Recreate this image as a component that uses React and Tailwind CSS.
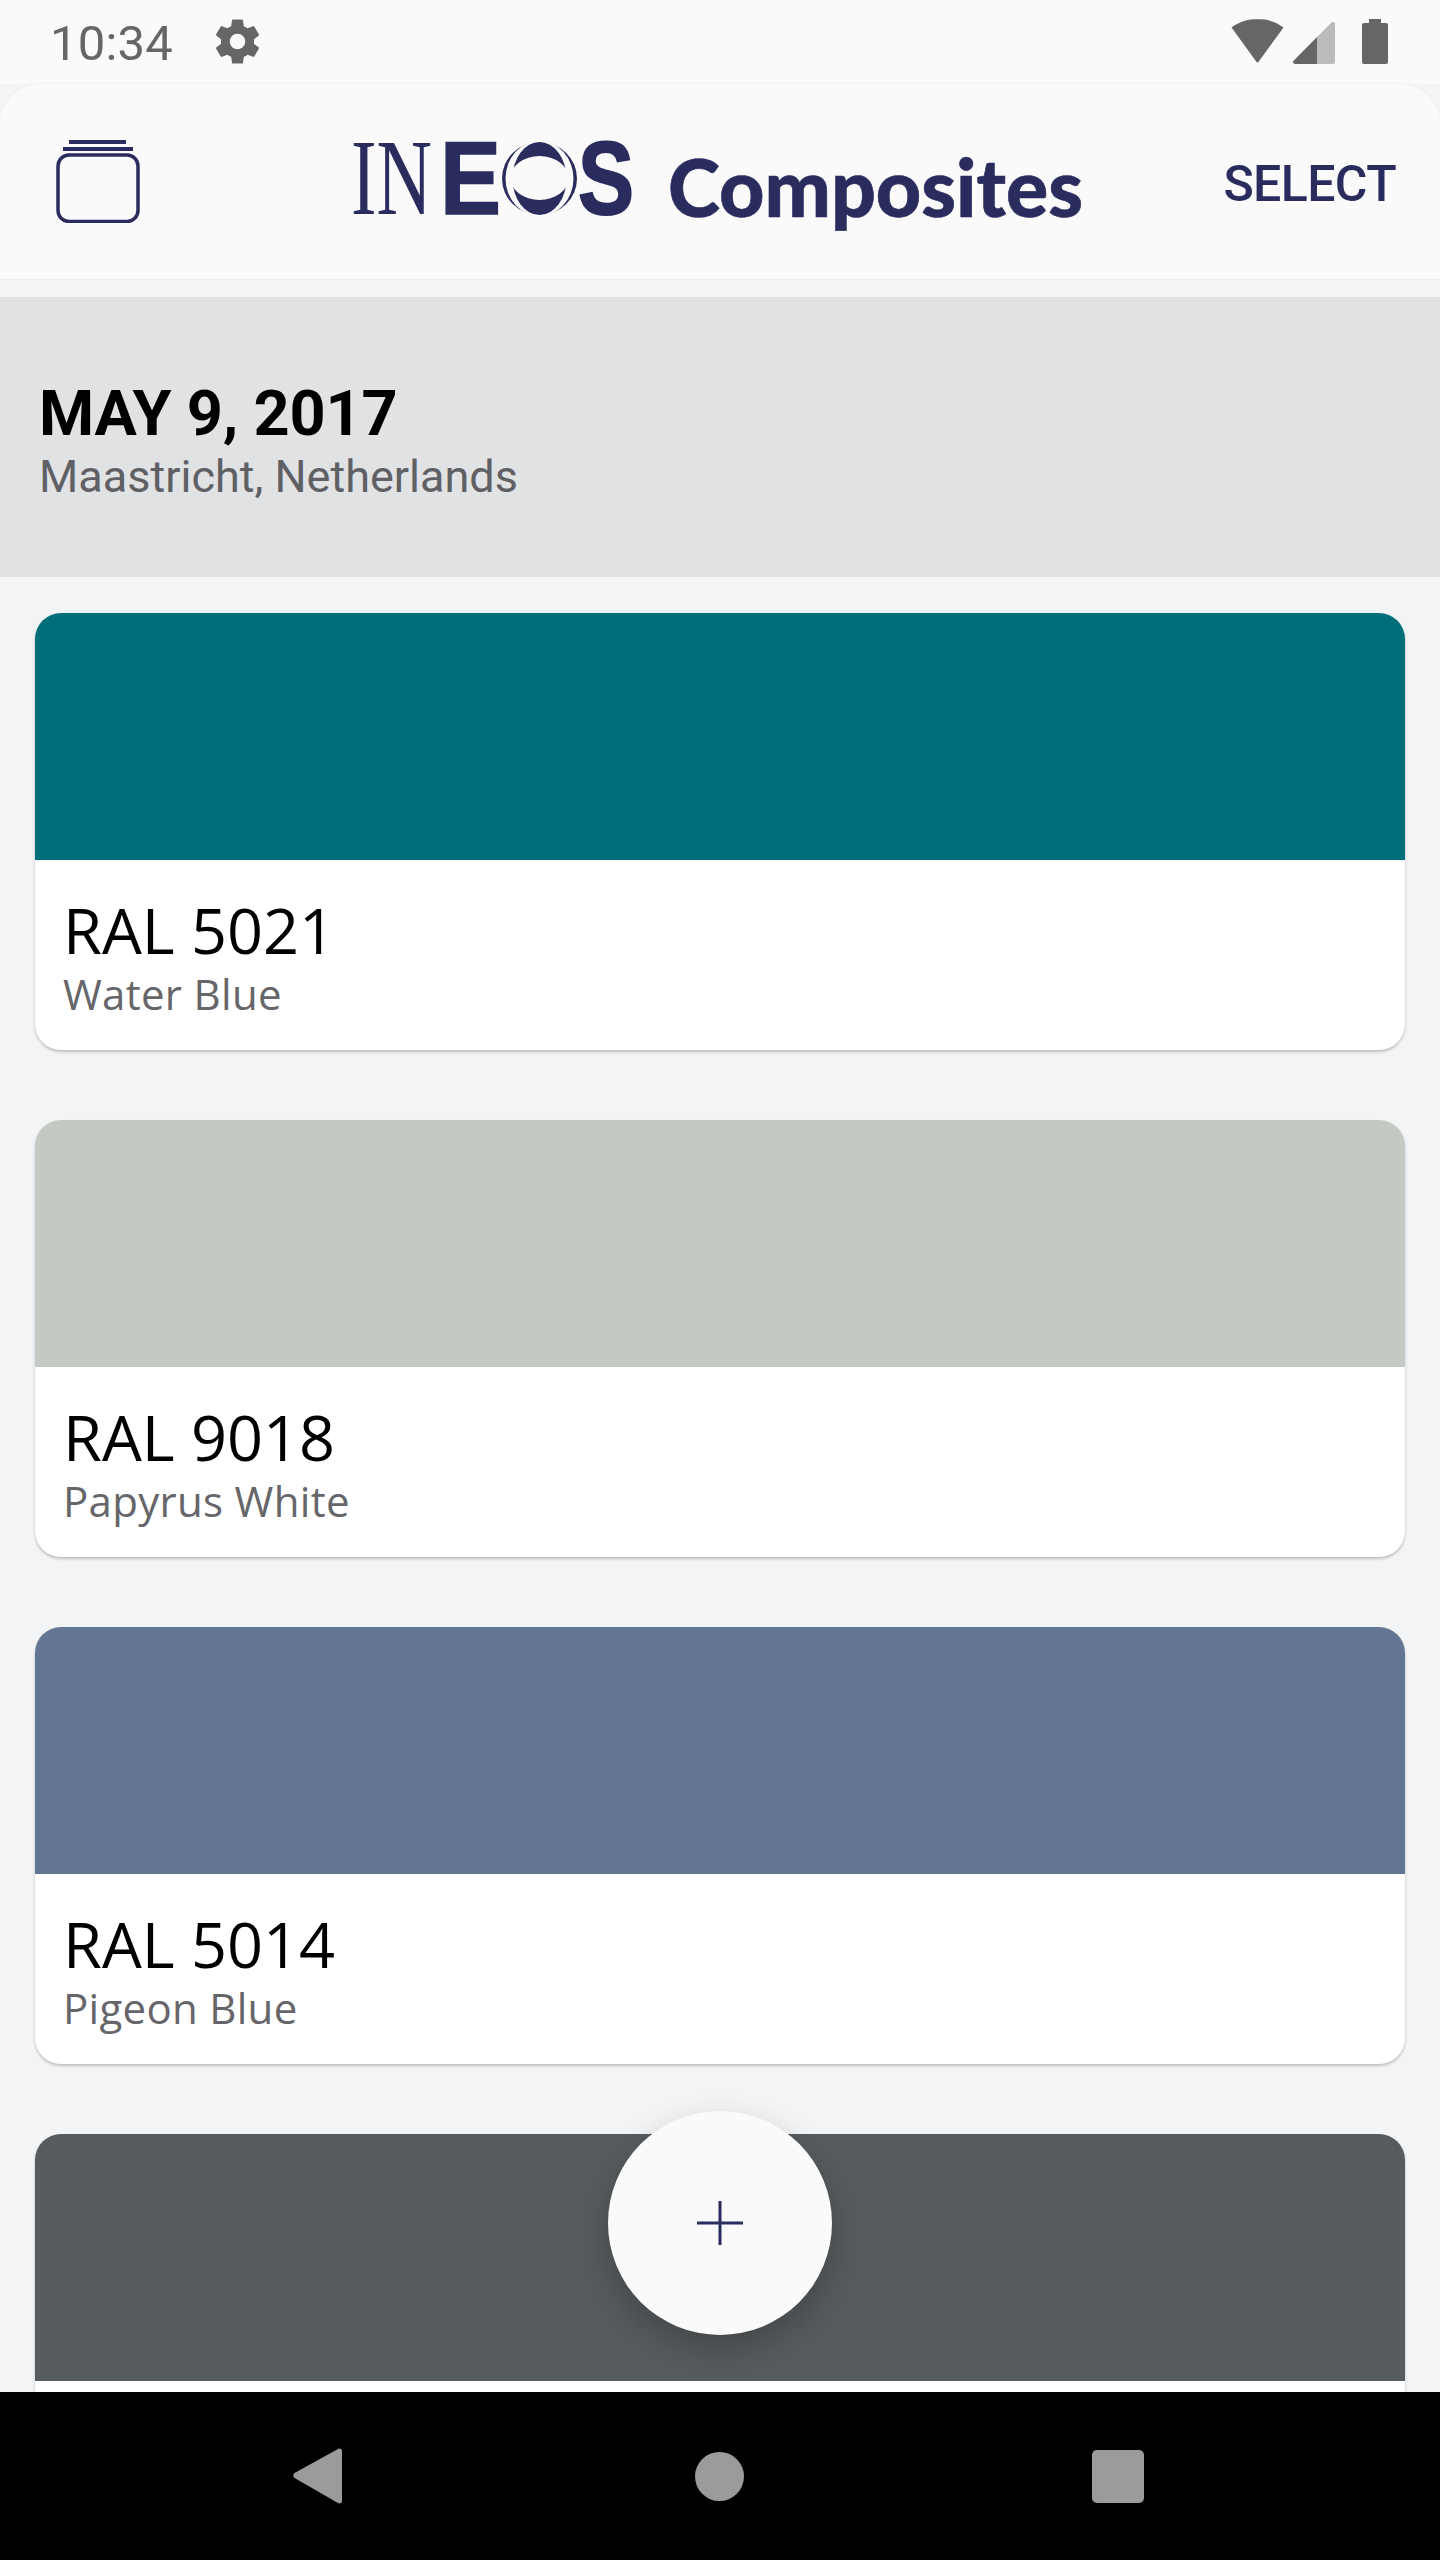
const navy = "#2a2c5e";

const colours = [
  { code: "RAL 5021", name: "Water Blue", swatch: "bg-[#006f7a]" },
  { code: "RAL 9018", name: "Papyrus White", swatch: "bg-[#c5c9c3]" },
  { code: "RAL 5014", name: "Pigeon Blue", swatch: "bg-[#637795]" },
  { swatch: "bg-[#565b5d]" },
];

function StatusBar() {
  return (
    <div className="flex h-[84px] shrink-0 items-center bg-[#fafafa] pl-[50px] pr-[51px]">
      <span className="pt-[3px] font-['Roboto',sans-serif] text-[49px] leading-[81px] tracking-[0.2px] text-[#666666]">10:34</span>
      {/* settings gear */}
      <svg className="ml-[38px] h-[53px] w-[53px] -translate-y-px" viewBox="0 0 24 24" fill="#666666">
        <path d="M19.43 12.98c.04-.32.07-.64.07-.98s-.03-.66-.07-.98l2.11-1.65c.19-.15.24-.42.12-.64l-2-3.46c-.12-.22-.39-.3-.61-.22l-2.49 1c-.52-.4-1.08-.73-1.69-.98l-.38-2.65C14.46 2.18 14.25 2 14 2h-4c-.25 0-.46.18-.49.42l-.38 2.65c-.61.25-1.17.59-1.69.98l-2.49-1c-.23-.09-.49 0-.61.22l-2 3.46c-.13.22-.07.49.12.64l2.11 1.65c-.04.32-.07.65-.07.98s.03.66.07.98l-2.11 1.65c-.19.15-.24.42-.12.64l2 3.46c.12.22.39.3.61.22l2.49-1c.52.4 1.08.73 1.69.98l.38 2.65c.03.24.24.42.49.42h4c.25 0 .46-.18.49-.42l.38-2.65c.61-.25 1.17-.59 1.69-.98l2.49 1c.23.09.49 0 .61-.22l2-3.46c.12-.22.07-.49-.12-.64l-2.11-1.65zM12 15.5c-1.93 0-3.5-1.57-3.5-3.5s1.57-3.5 3.5-3.5 3.5 1.57 3.5 3.5-1.57 3.5-3.5 3.5z" />
      </svg>
      {/* wifi, signal, battery */}
      <svg className="ml-auto h-[48px] w-[158px]" viewBox="1232 18 158 48">
        <path d="M1258.5 19c-10 0-19 3.2-26 8.500l24.700 34a1.600 1.600 0 0 0 2.600 0l24.700-34c-7-5.300-16-8.500-26-8.500z" fill="#666666" />
        <path d="M1318 37 L1332.500 22.500 C1334 21 1336 21.800 1336 24 V62 C1336 63.300 1335 64 1334 64 H1318 Z" fill="#bbbbbb" />
        <path d="M1318 37 V64 H1296 C1294 64 1293.300 62 1294.500 60.800 Z" fill="#666666" />
        <path d="M1370 19 H1382 V23 H1387 A2 2 0 0 1 1389 25 V62 A2 2 0 0 1 1387 64 H1365 A2 2 0 0 1 1363 62 V25 A2 2 0 0 1 1365 23 H1370 Z" fill="#666666" />
      </svg>
    </div>
  );
}

function Logo() {
  return (
    <svg className="ml-[213px] mt-[6px] h-[100px] w-[730px]" viewBox="353 135 730 100">
      <text x="351" y="214" fontFamily="Liberation Serif, serif" fontSize="107" fill={navy} textLength="81" lengthAdjust="spacingAndGlyphs">IN</text>
      <text x="440" y="214" fontFamily="Liberation Sans, sans-serif" fontWeight="700" fontSize="103" fill={navy} stroke={navy} strokeWidth="1.500" textLength="61" lengthAdjust="spacingAndGlyphs">E</text>
      {/* globe emblem */}
      <ellipse cx="539.500" cy="178.500" rx="37.500" ry="36.500" fill={navy} />
      <ellipse cx="539.500" cy="178.500" rx="34" ry="37.500" fill="#fafafa" />
      <ellipse cx="539.500" cy="178.500" rx="27" ry="36.500" fill={navy} />
      <ellipse cx="539.500" cy="178" rx="29" ry="22" fill="#fafafa" />
      <text x="578" y="214" fontFamily="Liberation Sans, sans-serif" fontWeight="700" fontSize="103" fill={navy} stroke={navy} strokeWidth="2" textLength="56" lengthAdjust="spacingAndGlyphs">S</text>
      <text x="668" y="217" fontFamily="Lato, sans-serif" fontWeight="900" fontSize="80" fill={navy} stroke={navy} strokeWidth="0.600" textLength="415" lengthAdjust="spacingAndGlyphs">Composites</text>
    </svg>
  );
}

function AppBar() {
  return (
    <div className="flex h-[196px] shrink-0 items-center rounded-t-[40px] border-b border-[#ececee] bg-[#fafafa] pl-[56px] pr-[44px] shadow-[0_-1px_2px_rgba(0,0,0,0.04)]">
      {/* jar icon */}
      <svg className="h-[83px] w-[84px]" viewBox="56 140 84 83" fill="none">
        <rect x="69" y="140" width="57" height="4" fill={navy} />
        <rect x="63" y="147" width="70" height="4" fill={navy} />
        <rect x="58" y="155" width="80" height="66.500" rx="11" stroke={navy} strokeWidth="3.500" />
      </svg>
      <Logo />
      <span className="ml-auto mt-[5px] font-['Roboto',sans-serif] text-[50px] font-medium leading-none tracking-[-0.6px] text-[#2a2c5e]">SELECT</span>
    </div>
  );
}

function ColourCard({ code, name, swatch }) {
  return (
    <div className="h-[437px] shrink-0 overflow-hidden rounded-[26px] bg-white shadow-[0_2px_3px_rgba(0,0,0,0.22)]">
      <div className={`h-[247px] ${swatch}`} />
      {code && (
        <div className="pl-[28px] pt-[31px] font-['Open_Sans',sans-serif]">
          <div className="text-[63px] leading-[78px] text-black">{code}</div>
          <div className="text-[42px] leading-[50px] tracking-[0.3px] text-[#66666a]">{name}</div>
        </div>
      )}
    </div>
  );
}

export default function App() {
  return (
    <div className="relative flex h-[2560px] w-full flex-col overflow-hidden bg-[#f3f4f6]">
      <StatusBar />
      <AppBar />

      <div className="mt-[17px] h-[280px] shrink-0 bg-[#e1e2e4] pl-[39px] pt-[80px] font-['Roboto',sans-serif]">
        <div className="text-[63px] font-bold leading-[74px] tracking-[-0.2px] text-black">MAY 9, 2017</div>
        <div className="-mt-[3px] text-[45px] leading-[58px] text-[#5f6064]">Maastricht, Netherlands</div>
      </div>

      <div className="flex min-h-0 flex-1 flex-col gap-[70px] overflow-hidden px-[35px] pt-[36px]">
        {colours.map((c) => (
          <ColourCard key={c.swatch} {...c} />
        ))}
      </div>

      {/* add button */}
      <button className="absolute bottom-[225px] left-[608px] flex h-[224px] w-[224px] items-center justify-center rounded-full bg-[#fafafa] shadow-[0_14px_34px_rgba(0,0,0,0.22)]">
        <svg className="h-[46px] w-[46px]" viewBox="0 0 46 46" fill="none" stroke={navy} strokeWidth="3">
          <path d="M23 1v44M0 23h46" />
        </svg>
      </button>

      {/* android nav bar */}
      <div className="flex h-[168px] shrink-0 items-center bg-black pl-[293px] pr-[296px]">
        <svg className="h-[56px] w-[49px]" viewBox="0 0 49 56" fill="#9b9b9b">
          <path d="M45 1 L1.500 25 A3.500 3.500 0 0 0 1.500 30 L45 55 C47 56 49 55 49 53 V3 C49 1 47 0 45 1 Z" />
        </svg>
        <div className="ml-[353px] h-[49px] w-[49px] rounded-full bg-[#9b9b9b]" />
        <div className="ml-auto h-[53px] w-[52px] rounded-[5px] bg-[#9b9b9b]" />
      </div>
    </div>
  );
}
